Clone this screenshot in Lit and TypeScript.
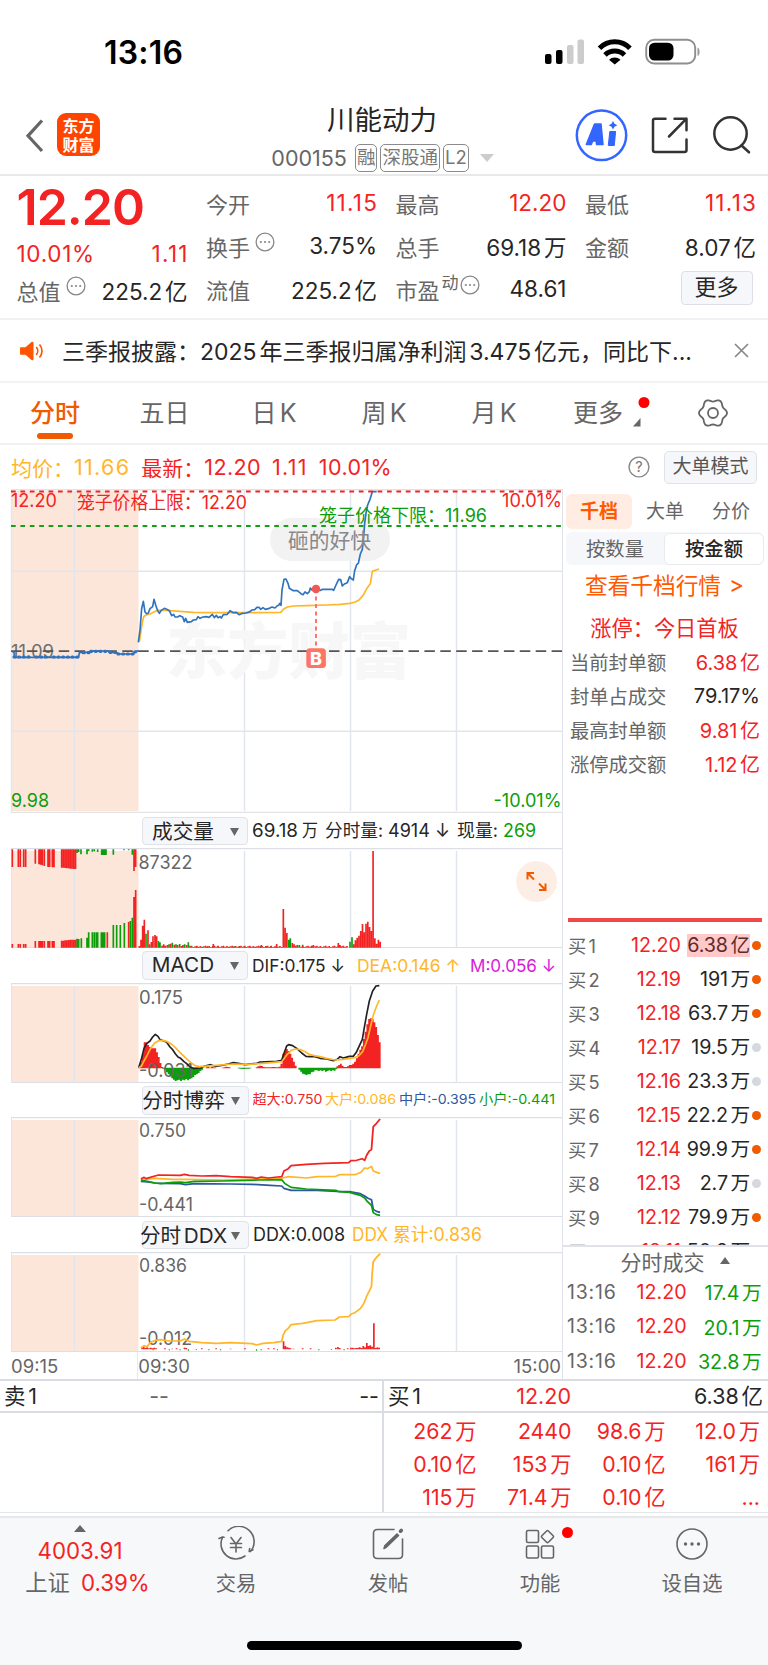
import { LitElement, html, svg, css } from "lit";
import { customElement, property } from "lit/decorators.js";

const GRID = "#e1e5ee";
const RED = "#f42323";
const GREEN = "#0b9e0b";
const AMBER = "#ffb629";
const GRAY = "#666";
const INK = "#262626";

type Bar = [number, number];

/** Vertical bars standing on (or hanging from) a base line, as one path. */
const barPath = (bars: Bar[], base: number, dir = -1) =>
  bars.map(([x, h]) => `M${x} ${base}v${(dir * h).toFixed(1)}`).join("");

/** Expands a run of heights into bars placed at a constant pitch. */
const run = (x: number, heights: number[], pitch = 5.3): Bar[] =>
  heights.map((h, i) => [x + i * pitch, h] as Bar).filter((b) => b[1] > 0);

const label = (
  x: number,
  y: number,
  text: string,
  width: number,
  fill = GRAY,
  size = 18.5
) => svg`<text x=${x} y=${y + size * 0.36} fill=${fill} font-size=${size}
  textLength=${width} lengthAdjust="spacingAndGlyphs">${text}</text>`;

const shared = css`
  * {
    box-sizing: border-box;
  }
  svg {
    display: block;
    flex: none;
  }
  .row {
    display: flex;
    align-items: center;
    white-space: nowrap;
  }
  .red {
    color: #f42323;
  }
  .green {
    color: #0b9e0b;
  }
  .amber {
    color: #ffb629;
  }
`;

@customElement("status-bar")
class StatusBar extends LitElement {
  static styles = [
    shared,
    css`
      :host {
        display: flex;
        justify-content: space-between;
        height: 97px;
        padding: 33px 67px 0 104px;
      }
      .time {
        font-size: 32px;
        line-height: 40px;
        font-weight: 600;
        letter-spacing: 0.2px;
        color: #000;
      }
      .signals {
        margin-top: 4px;
      }
    `,
  ];
  render() {
    return html`<div class="time">13:16</div>
      <svg class="signals" width="157" height="30" viewBox="544 37 157 30">
        <rect x="545" y="54" width="6.5" height="10" rx="2" />
        <rect x="556" y="50" width="6.5" height="14" rx="2" />
        <rect x="567" y="45" width="6.5" height="19" rx="2" fill="#ccc" />
        <rect x="577.5" y="39.5" width="6.5" height="24.5" rx="2" fill="#ccc" />
        <g fill="none" stroke="#000" stroke-width="5">
          <path d="M599.5 48.2a21.4 21.4 0 0 1 30.5 0" />
          <path d="M605 55a14 14 0 0 1 19.500 0" />
        </g>
        <path d="M609 59.800a8.500 8.500 0 0 1 11.500 0L614.750 64.500Z" />
        <rect x="646.2" y="39.800" width="49" height="23.700" rx="8" fill="none" stroke="#8e8e8e" stroke-width="1.900" />
        <rect x="649" y="42.700" width="24.500" height="17.800" rx="5.500" />
        <path d="M697.500 47.500c2.800 1 2.800 7.500 0 8.500z" fill="#999" />
      </svg>`;
  }
}

@customElement("title-bar")
class TitleBar extends LitElement {
  static styles = [
    shared,
    css`
      :host {
        display: flex;
        align-items: flex-start;
        height: 79px;
        border-bottom: 2px solid #e9e9e9;
      }
      .back {
        margin: 22px 0 0 25px;
      }
      .logo {
        width: 43px;
        height: 43px;
        margin: 16px 0 0 13px;
        border-radius: 9px;
        background: #ff4400;
        color: #fff;
        display: grid;
        place-content: center;
        text-align: center;
        font: 700 16px/18.500px "Noto Sans CJK SC", sans-serif;
      }
      .middle {
        flex: 1;
        display: flex;
        flex-direction: column;
        align-items: center;
      }
      .name {
        font-size: 27.500px;
        line-height: 40px;
        margin-top: 3px;
        margin-left: 89px;
        color: #262626;
      }
      .sub {
        color: #666;
        gap: 3px;
        height: 29px;
        margin-top: 3.500px;
        margin-left: 90px;
      }
      .code {
        font-size: 21.500px;
        margin-right: 5px;
        letter-spacing: 0;
      }
      .tag {
        border: 1.500px solid #8b8b8b;
        border-radius: 5px;
        font-size: 18.500px;
        line-height: 25px;
        height: 28px;
        padding: 0 1px;
        color: #777;
      }
      .caret {
        margin-left: 8px;
      }
      .tools {
        margin: 12px 17px 0 0;
      }
    `,
  ];
  render() {
    return html`<svg class="back" width="19" height="34" viewBox="0 0 19 34">
        <path d="M17 1.500 3 16.800 17 32" fill="none" stroke="#666" stroke-width="3.200" />
      </svg>
      <div class="logo"><span>东方</span><span>财富</span></div>
      <div class="middle">
        <div class="name">川能动力</div>
        <div class="sub row">
          <span class="code">000155</span><span class="tag">融</span><span class="tag">深股通</span
          ><span class="tag">L2</span>
          <svg class="caret" width="14" height="8"><path d="M0 0h14L7 8z" fill="#ccc" /></svg>
        </div>
      </div>
      <svg class="tools" width="176" height="54" viewBox="575 109 176 54">
        <circle cx="601.500" cy="135.300" r="24.700" fill="#fff" stroke="#3366ff" stroke-width="2.500" />
        <path
          fill-rule="evenodd"
          stroke="#3366ff"
          stroke-width="1.500"
          stroke-linejoin="round"
          fill="#3366ff"
          d="M594.500 124h6.500l2 20.500h-6.500l-.3-3.500h-3.600l-1.300 3.500h-5zM594.300 137h2.100l-.3-5.500z"
        />
        <path fill="#3366ff" stroke="#3366ff" stroke-width="1" stroke-linejoin="round" d="M609.800 131.500h5.800l-1.300 14h-6z" />
        <path fill="#3366ff" d="M613 121l1.500 2.800 2.800 1.500-2.800 1.500-1.500 2.800-1.500-2.800-2.800-1.500 2.800-1.500z" />
        <g fill="none" stroke="#333" stroke-width="2.500" stroke-linecap="round" stroke-linejoin="round">
          <path d="M665.500 118.700h-10.500q-2 0-2 2v29.300q0 2 2 2h29.500q2 0 2-2v-10.500" />
          <path d="M674.500 118.700h12v11.500M686.500 118.700 669 136.500" />
          <circle cx="730.500" cy="133.500" r="16.200" />
          <path d="m741.500 145.500 7.500 6.800" />
        </g>
      </svg>`;
  }
}

@customElement("more-dots")
class MoreDots extends LitElement {
  static styles = [
    shared,
    css`
      :host {
        display: block;
      }
    `,
  ];
  render() {
    return html`<svg width="20" height="20" viewBox="0 0 20 20">
      <circle cx="10" cy="10" r="8.900" fill="none" stroke="#888" stroke-width="1.300" />
      <g fill="#888">
        <circle cx="5.800" cy="10" r="1.100" /><circle cx="10" cy="10" r="1.100" /><circle cx="14.200" cy="10" r="1.100" />
      </g>
    </svg>`;
  }
}

@customElement("quote-panel")
class QuotePanel extends LitElement {
  static styles = [
    shared,
    css`
      :host {
        display: grid;
        grid-template-columns: repeat(4, 171px);
        column-gap: 18.500px;
        height: 144px;
        padding: 5px 0 0 16.500px;
        border-bottom: 2px solid #f1f1f1;
        font-size: 22.500px;
        color: #262626;
      }
      .cell {
        height: 43px;
        justify-content: space-between;
      }
      .k {
        color: #666;
        font-size: 22px;
      }
      .v {
        letter-spacing: 0;
      }
      .v.wide {
        letter-spacing: 1.300px;
        margin-right: -1.300px;
      }
      .v.mid {
        letter-spacing: 0.700px;
      }
      .price {
        height: 51px;
        font-size: 50px;
        font-weight: 600;
        letter-spacing: -1px;
      }
      .chg {
        height: 43px;
      }
      .low {
        height: 29px;
      }
      .hint {
        align-self: center;
        margin: -8px auto 0 5px;
      }
      .dyn {
        font-size: 17px;
        color: #666;
        margin: -14px 0 0 2px;
      }
      .dyn + .hint {
        margin-left: 1px;
      }
      .more {
        align-self: flex-end;
        width: 72px;
        height: 34px;
        margin: 4px 3.500px 0 0;
        border: 1.500px solid #dcdfe6;
        border-radius: 4px;
        background: #f6f7fa;
        font-size: 22px;
        line-height: 30px;
        text-align: center;
      }
      .col {
        display: flex;
        flex-direction: column;
      }
    `,
  ];
  render() {
    const cell = (k: string, v: string, tone = "") => html`<div class="cell row">
      <span class="k">${k}</span><span class="v ${tone}">${v}</span>
    </div>`;
    return html`<div class="col">
        <div class="price row red">12.20</div>
        <div class="cell chg row red"><span class="v mid">10.01%</span><span class="v wide">1.11</span></div>
        <div class="cell low row">
          <span class="k">总值</span><more-dots class="hint"></more-dots><span class="v">225.2亿</span>
        </div>
      </div>
      <div class="col">
        ${cell("今开", "11.15", "red wide")}
        <div class="cell row">
          <span class="k">换手</span><more-dots class="hint"></more-dots><span class="v">3.75%</span>
        </div>
        ${cell("流值", "225.2亿")}
      </div>
      <div class="col">
        ${cell("最高", "12.20", "red")}${cell("总手", "69.18万", "")}
        <div class="cell row">
          <span class="k">市盈</span><span class="dyn">动</span><more-dots class="hint"></more-dots
          ><span class="v">48.61</span>
        </div>
      </div>
      <div class="col">
        ${cell("最低", "11.13", "red wide")}${cell("金额", "8.07亿")}
        <div class="more">更多</div>
      </div>`;
  }
}

@customElement("news-strip")
class NewsStrip extends LitElement {
  static styles = [
    shared,
    css`
      :host {
        display: flex;
        align-items: center;
        height: 63px;
        padding: 0 19px 0 20px;
        border-bottom: 2px solid #f3f3f3;
      }
      .txt {
        flex: 1;
        margin-left: 18px;
        margin-top: -1px;
        font-size: 23px;
        color: #262626;
        white-space: nowrap;
      }
    `,
  ];
  render() {
    return html`<svg width="24" height="20" viewBox="0 0 24 20">
        <path d="M1 6.200h4.500L11.500 1c1-.7 2-.2 2 1v16c0 1.200-1 1.700-2 1L5.500 13.800H1q-1-.1-1-1V7.200q0-.9 1-1z" fill="#ff5400" />
        <path d="M16.200 6c2 2.300 2 5.700 0 8M19.500 3.500c3.300 3.600 3.300 9.400 0 13" fill="none" stroke="#ff5400" stroke-width="1.700" />
      </svg>
      <div class="txt">三季报披露：2025年三季报归属净利润3.475亿元，同比下...</div>
      <svg width="15" height="15"><path d="M1 1 14 14M14 1 1 14" stroke="#888" stroke-width="1.700" /></svg>`;
  }
}

const gear = Array.from({ length: 73 }, (_, i) => {
  const a = (i / 72) * Math.PI * 2;
  const r = 12.7 + 1.3 * Math.cos(6 * a);
  return `${i ? "L" : "M"}${(15 + r * Math.cos(a)).toFixed(2)} ${(15 + r * Math.sin(a)).toFixed(2)}`;
}).join("");

@customElement("period-tabs")
class PeriodTabs extends LitElement {
  static styles = [
    shared,
    css`
      :host {
        display: grid;
        grid-template-columns: 110px 109px 110px 110px 110px 98px 1fr;
        height: 62px;
        border-bottom: 2px solid #f1f1f1;
        color: #666;
        font-size: 25px;
      }
      .tab {
        display: flex;
        flex-direction: column;
        align-items: center;
        justify-content: flex-end;
        line-height: 36px;
        padding-bottom: 12px;
        position: relative;
      }
      .on {
        color: #f05a00;
        font-weight: 500;
        padding-bottom: 4px;
      }
      .on::after {
        content: "";
        width: 36px;
        height: 6px;
        margin-top: 2px;
        border-radius: 3px;
        background: #f05a00;
      }
      .mark {
        position: absolute;
        left: 83px;
        top: 13px;
      }
      .gear {
        margin: 14.500px 0 0 50.500px;
      }
    `,
  ];
  render() {
    return html`<div class="tab on">分时</div>
      ${["五日", "日K", "周K", "月K"].map((t) => html`<div class="tab">${t}</div>`)}
      <div class="tab">
        更多<svg class="mark" width="18" height="32" viewBox="0 0 18 32">
          <circle cx="12" cy="6.500" r="5.500" fill="#f00" />
          <path d="M8.500 22v8.500H1z" fill="#666" />
        </svg>
      </div>
      <svg class="gear" width="30" height="30">
        <path d=${gear + "Z"} fill="none" stroke="#666" stroke-width="1.800" />
        <circle cx="15" cy="15" r="5" fill="none" stroke="#666" stroke-width="1.800" />
      </svg>`;
  }
}

@customElement("info-line")
class InfoLine extends LitElement {
  static styles = [
    shared,
    css`
      :host {
        display: flex;
        align-items: center;
        height: 44px;
        padding: 0 11px;
        font-size: 21px;
        white-space: nowrap;
      }
      .num {
        margin-right: 11px;
        font-size: 21.500px;
        letter-spacing: 0.400px;
      }
      .one {
        letter-spacing: 1.300px;
      }
      .help {
        margin: 0 14px 0 auto;
      }
      .mode {
        width: 93px;
        height: 33px;
        border: 1.500px solid #dfe2e8;
        border-radius: 5px;
        background: #f6f7fa;
        color: #555;
        font-size: 19px;
        line-height: 30px;
        text-align: center;
      }
    `,
  ];
  render() {
    return html`<span class="amber">均价：</span><span class="num one amber">11.66</span
      ><span class="red">最新：</span><span class="num red">12.20</span><span class="num one red">1.11</span
      ><span class="num red">10.01%</span>
      <svg class="help" width="22" height="22" viewBox="0 0 22 22">
        <circle cx="11" cy="11" r="9.900" fill="none" stroke="#888" stroke-width="1.400" />
        <text x="11" y="16" text-anchor="middle" font-size="14.500" fill="#777">?</text>
      </svg>
      <div class="mode">大单模式</div>`;
  }
}

const columnLines = (y1: number, y2: number) => svg`
  <rect x="11.5" y=${y1} width="127" height=${y2 - y1} fill="#fce6da" />
  <path d="M74.500 ${y1}V${y2}M244.500 ${y1}V${y2}M350.500 ${y1}V${y2}M456.500 ${y1}V${y2}"
    stroke=${GRID} stroke-width="1.500" fill="none" />`;

@customElement("price-chart")
class PriceChart extends LitElement {
  static styles = [
    shared,
    css`
      :host {
        display: block;
      }
      .mark {
        font-family: "Noto Sans CJK SC", sans-serif;
        font-weight: 900;
      }
    `,
  ];
  render() {
    return html`<svg width="562" height="324" viewBox="0 489 562 324">
      ${columnLines(491, 811)}
      <text class="mark" x="166" y="674" font-size="61" fill="#f7f7f7" textLength="245" lengthAdjust="spacingAndGlyphs">东方财富</text>
      <path d="M11 571.3H562M11 731.2H562M11.5 489V813" stroke=${GRID} stroke-width="1.500" />
      <path d="M11 489.700H562M11 812.500H562" stroke="#e3e3e8" stroke-width="1.500" />
      <rect x="270" y="518" width="120" height="43" rx="21.500" fill="#f1f1f2" fill-opacity=".92" />
      ${label(11, 651, "11.09", 43, "#707070")}
      <path d="M11 651.200H562" stroke="#555" stroke-width="1.800" stroke-dasharray="10.500 5.400" />
      <g transform="translate(0 480) scale(.33333)" fill="none" stroke-linejoin="round">
        <path stroke=${AMBER} stroke-width="5"
          d="M418 485L422 460 427 428 431 410 438 405 450 402 462 396 474 391 500 391 540 394 580 397 640 398 760 398 842 397 850 388 862 381 880 378 920 377 980 375 1020 373 1050 370 1066 366 1078 359 1090 345 1102 323 1111 311 1117 274 1128 270 1137 267" />
        <path stroke="#2f72bd" stroke-width="5"
          d="M37 516H42L43 532H236L238 518 268 516 276 513H324L328 517H348L356 522H400L404 516 416 512" />
        <path stroke="#2f72bd" stroke-width="9.500" stroke-linecap="round" stroke-dasharray="3 11"
          d="M40 518M42 531H90M108 531H142M160 531H236M250 518H268M272 514H326M330 517H350M354 522H400M404 516L416 513" />
        <path stroke="#2f72bd" stroke-width="5"
          d="M415 487L420 450 425 386 430 364 435 396 440 401 445 399 450 386 458 380 462 358 468 378 473 392 478 400 484 391 493 385 500 388 508 392 515 407 521 403 525 411 533 411 539 407 548 411 553 425 557 415 562 427 574 425 580 420 589 419 594 410 600 415 609 411 619 410 627 412 637 403 643 413 649 406 654 413 660 410 664 414 670 404 682 403 690 392 700 398 709 397 717 404 728 400 738 399 750 395 756 390 764 389 771 382 777 382 782 388 789 383 796 388 808 385 816 381 825 384 831 378 836 376 840 370 843 376 846 330 852 298 858 297 864 310 868 325 880 332 892 332 903 341 909 344 915 336 922 341 928 335 931 324 936 330 942 324 950 330 962 331 968 328 996 328 1001 331 1008 315 1016 298 1022 299 1027 318 1033 312 1042 308 1049 290 1054 296 1060 300 1064 272 1070 254 1075 250 1081 222 1087 208 1091 170 1094 130 1098 100 1103 75 1110 58 1117 35H1130" />
      </g>
      <path d="M316 589V648" stroke="#ff7468" stroke-width="2" stroke-dasharray="4 3.500" />
      <circle cx="316" cy="589" r="4.300" fill="#ee5a50" />
      <rect x="306.300" y="648.300" width="19.600" height="19.600" rx="3.500" fill="#ff7565" />
      <text x="316" y="664.500" text-anchor="middle" font-size="18" font-weight="800" fill="#fff">B</text>
      <path d="M11 491.400H562" stroke=${RED} stroke-width="2" stroke-dasharray="4.700 4.700" />
      <path d="M11 526H562" stroke="#15a015" stroke-width="2" stroke-dasharray="4.700 4.700" />
      ${label(11, 500.5, "12.20", 46, RED)} ${label(77, 502, "笼子价格上限：12.20", 170, RED)}
      ${label(502, 500.5, "10.01%", 60, RED)} ${label(319, 515, "笼子价格下限：11.96", 168, GREEN)}
      ${label(11, 800, "9.98", 38, GREEN)} ${label(493.5, 800, "-10.01%", 68, GREEN)}
      ${label(288, 540, "砸的好快", 83, "#888", 21)}
    </svg>`;
  }
}

@customElement("indicator-head")
class IndicatorHead extends LitElement {
  @property() name = "";
  static styles = [
    shared,
    css`
      :host {
        display: flex;
        align-items: center;
        height: 35px;
        padding: 1px 0 0 142px;
        white-space: nowrap;
      }
      .pick {
        width: 107px;
        height: 28.500px;
        border: 1.500px solid #dfe2e8;
        border-radius: 4px;
        background: #f6f7fa;
        color: #262626;
        font-size: 20.700px;
        margin-right: 4px;
        position: relative;
        justify-content: center;
        padding: 0 24px 2px 0;
      }
      .pick svg {
        position: absolute;
        right: 8px;
        top: 10px;
      }
    `,
  ];
  render() {
    return html`<div class="pick row">
        ${this.name}<svg width="9" height="8"><path d="M0 0h9L4.500 8z" fill="#666" /></svg>
      </div>
      <slot></slot>`;
  }
}

const frame = (top: number) => svg`
  ${columnLines(top + 3, top + 99)}
  <path d="M11.500 ${top}V${top + 100}" stroke=${GRID} />
  <path d="M11 ${top + 0.5}H562M11 ${top + 99.7}H562" stroke="#dcdfe6" stroke-width="1.500" />`;

const tiny = (from: number, to: number, seed: number): Bar[] => {
  const out: Bar[] = [];
  for (let x = from, i = seed; x < to; x += 5.3, i++) out.push([x, 2 + ((i * 7) % 5)]);
  return out;
};

@customElement("volume-chart")
class VolumeChart extends LitElement {
  static styles = [shared];
  render() {
    const hangRed: Bar[] = [
      [37, 53], [55, 53], [61, 53], [71, 53], [77, 53], [106, 43], [117, 45], [122, 46], [127, 48], [133, 50],
      [144, 53], [149, 53], [157, 54], [162, 54], ...run(185, [55, 55, 56, 57, 57, 58, 58, 59, 59], 5.2),
      [402, 65], [407, 53],
    ];
    const hangGreen: Bar[] = [
      [231, 11], [236, 8], [243, 15], [261, 15], [266, 5], [277, 7], [283, 6], [293, 8], [305, 17], [309, 17],
      [314, 17], [318, 17], [340, 16], [372, 3], [386, 3], [397, 16],
    ];
    const green: Bar[] = [
      [231, 27], [236, 26], [244, 28], [261, 30], [266, 46], [277, 46], [283, 46], [289, 46], [293, 46],
      ...run(304, [46, 46, 46], 5), [340, 68], [350, 68], [361, 68], [373, 74], [391, 80], [397, 90],
      [438, 42], [449, 10], [475, 20], [480, 16], [507, 10], [517, 15], [528, 10], [539, 11], [554, 10], [565, 16],
      ...tiny(575, 845, 2).filter((_, i) => i % 3 === 0), [866, 24], [871, 28], [892, 8], [898, 8], [908, 9],
      [935, 6], [1050, 18], [1056, 31],
    ];
    const red: Bar[] = [
      [37, 11], [55, 11], [61, 11], [71, 11], [77, 11], [106, 20], [117, 20], [122, 20], [127, 20], [133, 20],
      [144, 20], [149, 20], [157, 20], [162, 20], ...run(185, [21, 21, 22, 22, 23, 24, 24, 24, 24], 5.2),
      [322, 46], [386, 77], [402, 152], [407, 173],
      [418, 5], [423, 24], [428, 66], [433, 84], [444, 52], [454, 17], [459, 34], [465, 38], [470, 34], [486, 6],
      [491, 10], [496, 6], [502, 8], [512, 12], [523, 9], [533, 8], [544, 5], [549, 8], [560, 8], [570, 6],
      ...tiny(580, 845, 0), [640, 11], [784, 8], [830, 11], ...run(850, [116, 60, 44]), ...run(877, [14, 10, 6]),
      ...tiny(903, 1045, 3), [940, 8], [1015, 14], [1020, 8],
      ...run(1061, [10, 22, 30, 36, 50, 71, 46, 72, 78, 62, 50, 290, 28, 12, 24, 18]),
    ];
    return html`<svg width="562" height="100" viewBox="0 847 562 100">
      ${frame(847)}
      <g transform="translate(0 810) scale(.33333)" stroke-width="5" fill="none">
        <path stroke=${GREEN} d=${barPath(green, 410) + barPath(hangGreen, 115, 1)} />
        <path stroke=${RED} d=${barPath(red, 410) + barPath(hangRed, 115, 1)} />
      </g>
      ${label(138.5, 861, "87322", 54)}
      <circle cx="536.500" cy="880.500" r="20.500" fill="#fdeee5" />
      <path
        d="M527.500 878.500v-6.500h6.500M527.500 872l6.500 6.500M545.500 882.500v6.500h-6.500M545.500 889l-6.500-6.500"
        stroke="#f05a00" stroke-width="2" fill="none" />
    </svg>`;
  }
}

@customElement("macd-chart")
class MacdChart extends LitElement {
  static styles = [shared];
  render() {
    const red: Bar[] = [
      ...run(418, [5, 20, 45, 78, 78, 70, 64, 60, 60, 60, 48, 34, 16, 4]),
      ...run(620, [3, 4, 2, 5, 3, 2, 0, 0, 0, 2, 3, 5, 4, 3]),
      ...run(770, [3, 6, 8, 7, 4, 3, 3, 3, 3, 4, 4, 3, 3, 5, 14]),
      ...run(850, [44, 52, 58, 52, 44, 32, 20, 8]),
      ...run(1012, [6, 10, 14, 8, 4, 4, 6, 10, 10, 14, 20, 30, 44, 56, 66, 88, 110, 132, 148, 150, 148, 138, 124, 100, 78], 5.3),
    ];
    const green: Bar[] = [
      ...run(490, [3, 6, 14, 20, 26, 32, 36, 40, 38, 36, 40, 36, 38, 34, 38, 34, 32, 28, 22, 20, 16, 10, 6]),
      ...run(715, [2, 3, 3, 4, 3, 3, 3, 2]),
      ...run(898, [6, 12, 18, 20, 22, 20, 20, 14, 12, 8, 8, 10, 8, 10, 8, 12, 10, 8, 10, 8, 9, 4]),
    ];
    return html`<svg width="562" height="100" viewBox="0 982 562 100">
      ${frame(982)}
      <g transform="translate(0 810) scale(.33333)" fill="none">
        <path stroke=${GREEN} stroke-width="5.500" d=${barPath(green, 770, 1)} />
        <path stroke=${RED} stroke-width="5.500" d=${barPath(red, 772)} />
      </g>
      ${label(139, 996, "0.175", 44)} ${label(139, 1069.5, "-0.031", 54)}
      <g transform="translate(0 810) scale(.33333)" fill="none" stroke-linejoin="round">
        <path stroke="#222" stroke-width="5"
          d="M416 770L424 745 432 712 440 698 450 690 458 678 466 670 474 676 480 686 492 690 500 694 510 708 518 716 526 728 534 738 542 742 552 752 560 758 570 768 580 772 602 771 612 766 632 761 645 766 665 763 685 759 700 755 715 757 735 761 770 757 780 753 830 751 845 748 851 730 860 705 866 701 878 704 890 712 905 726 918 736 930 737 945 737 960 742 980 744 1000 749 1012 745 1020 737 1030 741 1048 736 1060 736 1070 722 1080 700 1087 685 1092 655 1100 610 1108 570 1118 540 1128 525 1138 524" />
        <path stroke=${AMBER} stroke-width="5"
          d="M416 770L424 766 432 750 442 732 452 712 464 696 476 689 488 688 502 692 514 699 526 710 540 724 556 740 572 754 584 763 598 767 640 764 700 759 745 760 790 757 845 752 853 742 862 730 874 718 886 714 902 716 916 722 926 729 942 734 960 737 980 742 1005 747 1030 745 1060 741 1076 735 1088 722 1096 702 1104 680 1112 645 1120 612 1130 585 1138 567" />
      </g>
    </svg>`;
  }
}

@customElement("game-chart")
class GameChart extends LitElement {
  static styles = [shared];
  render() {
    return html`<svg width="562" height="100" viewBox="0 1117 562 100">
      ${frame(1117)} ${label(139, 1130.5, "0.750", 47)} ${label(139, 1204, "-0.441", 54)}
      <g transform="translate(0 1080) scale(.3603 .33333)" fill="none" stroke-width="5" stroke-linejoin="round">
        <path stroke="#2e57a0" d="M391 304L410 306 430 309 450 310 500 311 515 314 540 311 640 312 700 313 750 316 782 318 788 325 808 331 880 331 935 334 970 335 1000 341 1012 348 1020 354 1031 359 1036 388 1045 394 1055 397" />
        <path stroke=${AMBER} d="M391 299L430 295 480 298 515 298 620 300 700 297 750 296 785 294 800 290 850 294 880 290 932 289 942 284 985 284 1002 277 1012 264 1020 266 1031 259 1036 273 1045 277 1055 280" />
        <path stroke=${GREEN} d="M391 301L410 304 430 309 445 311 480 307 500 306 515 308 540 304 620 303 720 300 782 299 790 310 808 322 850 327 932 331 940 335 970 337 1000 346 1012 354 1020 365 1031 376 1036 398 1045 404 1055 406" />
        <path stroke=${RED} d="M391 297L400 292 405 296 430 288 440 285 500 286 512 283 525 286 560 288 600 287 640 290 700 292 712 295 725 291 745 294 770 291 782 290 788 273 800 266 808 257 850 253 900 250 968 248 974 242 990 241 1005 236 1012 241 1018 225 1025 213 1031 209 1033 180 1036 140 1045 130 1055 117" />
      </g>
    </svg>`;
  }
}

@customElement("ddx-chart")
class DdxChart extends LitElement {
  static styles = [shared];
  render() {
    const red: Bar[] = [
      ...run(394, [6, 9, 4, 6, 3, 5, 3, 5, 3], 4.9), [458, 3], [478, 2], [490, 3], [512, 5], [517, 4], [560, 3],
      [600, 3], [640, 2], [680, 3], [745, 3], [760, 3], ...run(787, [24, 10, 6, 5, 3], 4.9), [815, 2], [840, 3],
      [862, 3], [932, 5], [938, 7], [943, 4], [965, 3], ...run(974, [5, 5, 3, 4, 5, 6, 4, 10, 6, 19, 10, 12, 8, 78, 4, 6, 5], 4.9),
    ];
    const green: Bar[] = [[425, 3], [470, 3], [500, 3], [523, 4], [545, 2], [580, 3], [612, 3], [712, 4], [725, 3], [770, 3], [885, 3], [920, 2], [955, 3]];
    return html`<svg width="562" height="100" viewBox="0 1252 562 100">
      ${frame(1252)} ${label(139, 1265.5, "0.836", 48)} ${label(139, 1338.5, "-0.012", 53)}
      <g transform="translate(0 1080) scale(.3603 .33333)" fill="none" stroke-linejoin="round">
        <path stroke=${RED} stroke-width="4.700" d=${barPath(red, 808)} />
        <path stroke=${GREEN} stroke-width="3.500" d=${barPath(green, 808, 1)} />
        <path stroke=${AMBER} stroke-width="5" d="M391 804L400 797 408 800 418 787 432 781 445 779 470 783 500 783 512 777 525 784 560 788 600 790 640 788 700 791 712 795 730 790 760 788 782 784 786 765 792 752 800 745 808 734 840 730 880 722 930 720 942 711 968 710 975 702 985 698 1000 686 1010 670 1018 648 1031 620 1033 580 1036 545 1045 532 1055 521" />
      </g>
    </svg>`;
  }
}

@customElement("charts-column")
class ChartsColumn extends LitElement {
  static styles = [
    shared,
    css`
      :host {
        display: flex;
        flex-direction: column;
        width: 563px;
        height: 890px;
        border-right: 1.500px solid #dfe2ea;
      }
      price-chart,
      volume-chart,
      macd-chart,
      game-chart,
      ddx-chart {
        display: block;
      }
      .axis {
        flex: 1;
        justify-content: space-between;
        padding: 0 1px 0 11px;
        font-size: 18.500px;
        color: #666;
      }
      .mid {
        margin-right: auto;
        margin-left: 79px;
        border-left: 1px solid #e8ebf1;
        height: 27px;
        line-height: 28px;
      }
    `,
  ];
  render() {
    const legend = (parts: [string, number, number, string][], size: number) => html`<svg width="310" height="28" viewBox="253 0 310 28">
      ${parts.map(([t, x, w, c]) => label(x, 13.5, t, w, c, size))}
    </svg>`;
    return html`<price-chart></price-chart>
      <indicator-head name="成交量">
        ${legend([["69.18", 253, 46, INK], ["万", 303, 16, INK], ["分时量:", 326, 58, INK], ["4914 ↓", 389, 62, INK], ["现量:", 458, 41, INK], ["269", 504, 33, GREEN]], 18.2)}
      </indicator-head>
      <volume-chart></volume-chart>
      <indicator-head name="MACD">
        ${legend([["DIF:0.175 ↓", 253, 93, INK], ["DEA:0.146 ↑", 358, 103, AMBER], ["M:0.056 ↓", 471, 86, "#d81bd8"]], 17.5)}
      </indicator-head>
      <macd-chart></macd-chart>
      <indicator-head name="分时博弈">
        ${legend([["超大:0.750", 252.5, 70, RED], ["大户:0.086", 325, 71, AMBER], ["中户:-0.395", 399, 77, "#2e57a0"], ["小户:-0.441", 479, 76, GREEN]], 13.5)}
      </indicator-head>
      <game-chart></game-chart>
      <indicator-head name="分时DDX">
        ${legend([["DDX:0.008", 253, 92, INK], ["DDX", 352, 36, AMBER], ["累计:0.836", 393, 89, AMBER]], 18)}
      </indicator-head>
      <ddx-chart></ddx-chart>
      <div class="axis row"><span>09:15</span><span class="mid">09:30</span><span>15:00</span></div>`;
  }
}

@customElement("depth-column")
class DepthColumn extends LitElement {
  static styles = [
    shared,
    css`
      :host {
        display: flex;
        flex-direction: column;
        width: 205px;
        height: 890px;
        color: #262626;
      }
      :host > * {
        flex: none;
      }
      .tabs {
        height: 36px;
        margin: 4px 4px 3px 3px;
        font-size: 19px;
        color: #666;
      }
      .tabs span {
        width: 66px;
        line-height: 35px;
        border-radius: 6px;
        text-align: center;
      }
      .tabs .on {
        background: #ffede4;
        color: #ff5a00;
        font-weight: 700;
      }
      .seg {
        height: 33px;
        margin: 0 4px 0 3px;
        border-radius: 6px;
        background: #f6f7fa;
        color: #666;
        font-size: 19.300px;
      }
      .seg span {
        flex: 1;
        text-align: center;
        line-height: 30px;
      }
      .seg .on {
        background: #fff;
        border: 1.500px solid #e8eaee;
        border-radius: 6px;
        color: #262626;
        font-weight: 500;
      }
      .link {
        height: 38px;
        justify-content: center;
        color: #ff5a00;
        font-size: 22.700px;
        gap: 8px;
        padding-right: 2px;
      }
      .limit {
        height: 46px;
        justify-content: center;
        color: #f42323;
        font-size: 21.200px;
        padding-right: 2px;
      }
      .facts {
        padding: 0 8px 0 7px;
        height: 273.500px;
        margin-top: -4.500px;
        font-size: 20px;
      }
      .fact {
        height: 34px;
        justify-content: space-between;
      }
      .fact .k {
        color: #666;
        font-size: 19.300px;
      }
      .bar {
        height: 4px;
        margin: 0 6px 6px 5px;
        background: #f04848;
      }
      .buys {
        height: 318.500px;
        overflow: hidden;
        border-bottom: 2px solid #dfe2e8;
      }
      .buy {
        display: grid;
        grid-template-columns: 43px 73px 66px 1fr;
        align-items: center;
        height: 34px;
        padding-left: 5px;
        font-size: 19.700px;
        white-space: nowrap;
      }
      .buy .k {
        color: #666;
        font-size: 18.300px;
      }
      .buy .p {
        text-align: right;
        color: #f42323;
        padding-right: 3px;
      }
      .buy .v {
        justify-self: end;
        height: 23px;
        line-height: 23px;
        letter-spacing: -0.1px;
      }
      .hot .v {
        background: #ffc9c9;
        color: #5c2c2c;
      }
      .dot {
        width: 9px;
        height: 9px;
        margin-left: 1.500px;
        border-radius: 50%;
        background: #d5d8de;
      }
      .dot.on {
        background: #f05a00;
      }
      .deal {
        height: 28px;
        justify-content: center;
        gap: 15px;
        padding-left: 19px;
        color: #666;
        font-size: 21px;
      }
      .trade {
        display: grid;
        grid-template-columns: 1fr 70px 75px;
        align-items: center;
        height: 34.600px;
        padding: 0 8px 0 4px;
        font-size: 19.700px;
        text-align: right;
        white-space: nowrap;
      }
      .trade .t {
        color: #666;
        text-align: left;
        font-size: 19.500px;
        letter-spacing: 0.800px;
      }
    `,
  ];
  render() {
    const facts = [
      ["当前封单额", "6.38亿", "red"],
      ["封单占成交", "79.17%", ""],
      ["最高封单额", "9.81亿", "red"],
      ["涨停成交额", "1.12亿", "red"],
    ];
    const buys: [string, string, boolean][] = [
      ["12.20", "6.38亿", true],
      ["12.19", "191万", true],
      ["12.18", "63.7万", true],
      ["12.17", "19.5万", false],
      ["12.16", "23.3万", false],
      ["12.15", "22.2万", true],
      ["12.14", "99.9万", true],
      ["12.13", "2.7万", false],
      ["12.12", "79.9万", true],
      ["12.11", "50.2万", true],
    ];
    return html`<div class="tabs row"><span class="on">千档</span><span>大单</span><span>分价</span></div>
      <div class="seg row"><span>按数量</span><span class="on">按金额</span></div>
      <div class="link row"><span>查看千档行情</span><span>&gt;</span></div>
      <div class="limit row">涨停：今日首板</div>
      <div class="facts">
        ${facts.map(([k, v, c]) => html`<div class="fact row"><span class="k">${k}</span><span class=${c}>${v}</span></div>`)}
      </div>
      <div class="bar"></div>
      <div class="buys">
        ${buys.map(
          ([p, v, on], i) => html`<div class="buy ${i ? "" : "hot"}">
            <span class="k">买${i + 1}</span><span class="p">${p}</span><span class="v">${v}</span
            ><span class="dot ${on ? "on" : ""}"></span>
          </div>`
        )}
      </div>
      <div class="deal row">分时成交<svg width="10" height="7"><path d="M0 7h10L5 0z" fill="#666" /></svg></div>
      ${["17.4万", "20.1万", "32.8万"].map(
        (v) => html`<div class="trade"><span class="t">13:16</span><span class="red">12.20</span><span class="green">${v}</span></div>`
      )}`;
  }
}

@customElement("order-book")
class OrderBook extends LitElement {
  static styles = [
    shared,
    css`
      :host {
        display: block;
        height: 134px;
        border-top: 2px solid #d9dce3;
        border-bottom: 1px solid #e4e6ea;
        color: #262626;
        font-size: 21.500px;
      }
      .split {
        display: grid;
        grid-template-columns: 384px 384px;
        height: 131px;
      }
      .side {
        border-right: 2px solid #d9dce3;
        height: 131px;
      }
      .side.buy {
        border: 0;
      }
      .head {
        display: grid;
        grid-template-columns: 90px 93px 1fr;
        height: 32px;
        line-height: 28px;
        align-items: center;
        padding: 0 5px 0 4px;
        border-bottom: 2px solid #d9dce3;
        text-align: right;
        white-space: nowrap;
      }
      .head .n {
        text-align: left;
      }
      .sell .head {
        grid-template-columns: 90px 75px 1fr;
        padding-right: 3px;
      }
      .dim {
        color: #666;
      }
      .lots {
        display: grid;
        grid-template-columns: 92.500px 95px 94px 94.500px;
        grid-auto-rows: 33.300px;
        align-items: center;
        line-height: 30px;
        padding-top: 1px;
        text-align: right;
        color: #f42323;
        white-space: nowrap;
        font-size: 21.300px;
      }
    `,
  ];
  render() {
    const lots = ["262万", "2440", "98.6万", "12.0万", "0.10亿", "153万", "0.10亿", "161万", "115万", "71.4万", "0.10亿", "..."];
    return html`<div class="split">
      <div class="side sell">
        <div class="head"><span class="n">卖1</span><span class="dim">--</span><span>--</span></div>
      </div>
      <div class="side buy">
        <div class="head"><span class="n">买1</span><span class="red">12.20</span><span>6.38亿</span></div>
        <div class="lots">${lots.map((l) => html`<span>${l}</span>`)}</div>
      </div>
    </div>`;
  }
}

@customElement("bottom-nav")
class BottomNav extends LitElement {
  static styles = [
    shared,
    css`
      :host {
        display: flex;
        flex-direction: column;
        justify-content: space-between;
        align-items: center;
        height: 149px;
        margin-top: 3px;
        background: #f7f8fa;
        border-top: 2px solid #e6e8eb;
        padding-bottom: 15px;
        color: #666;
      }
      .items {
        display: grid;
        grid-template-columns: 160px repeat(4, 152px);
        height: 84px;
      }
      .item {
        display: flex;
        flex-direction: column;
        align-items: center;
        padding-top: 8px;
        font-size: 20.300px;
      }
      .item span {
        line-height: 28px;
        margin-top: 8px;
      }
      .index {
        padding-top: 6.500px;
        font-size: 22.300px;
      }
      .index .val {
        line-height: 32px;
        margin-top: 3px;
      }
      .index .line {
        line-height: 32px;
        gap: 11px;
        display: flex;
        padding-left: 15px;
      }
      .index span.pct,
      .index span.nm {
        margin: 0;
        line-height: 31px;
      }
      .home {
        width: 275px;
        height: 9.500px;
        border-radius: 5px;
        background: #000;
      }
    `,
  ];
  render() {
    const icon = (body: unknown) => html`<svg width="60" height="36" viewBox="-30 -18 60 36" fill="none"
      stroke="#666" stroke-width="1.600" stroke-linecap="round" stroke-linejoin="round">${body}</svg>`;
    return html`<div class="items">
        <div class="item index">
          <svg width="12" height="7"><path d="M0 7h12L6 0z" fill="#666" /></svg>
          <span class="val red">4003.91</span>
          <div class="line"><span class="nm">上证</span><span class="pct red">0.39%</span></div>
        </div>
        <div class="item">
          ${icon(svg`<path d="M-8-13.200A15.300 15.300 0 0 1 14.500 7.500M9 12A15 15 0 0 1-13.500-6.500M-17-5.500l3.500-1.500 1.500.3M13.200 7.500l3.800-1.700M13.200 7.500l.5-3" />
            <path d="M-5-6.500 0 0 5-6.500M0 0V8M-5.500-.5H5.500M-5.500 3.500H5.500" />`)}
          <span>交易</span>
        </div>
        <div class="item">
          ${icon(svg`<path d="M6-14.500H-10.500Q-14.500-14.500-14.500-10.500V10.500Q-14.500 14.500-10.500 14.500H10.500Q14.500 14.500 14.500 10.500V-5" />
            <path d="M-4 4.500-3 1.500 9-10 10.500-8.500-1.500 3Z" fill="#666" /><path d="M12.500-12.800l.8-.8" stroke-width="3.600" />`)}
          <span>发帖</span>
        </div>
        <div class="item">
          ${icon(svg`<rect x="-13.500" y="-13.500" width="12" height="12" rx="1.500" /><rect x="-13.500" y="2" width="12" height="12" rx="1.500" />
            <rect x="1.500" y="2" width="12" height="12" rx="1.500" /><rect x="2.900" y="-12" width="9.200" height="9.200" rx="1.200" transform="rotate(45 7.500 -7.400)" />`)}
          <span>功能</span>
        </div>
        <div class="item">
          ${icon(svg`<circle r="15" /><g fill="#666" stroke="none"><circle cx="-6.500" r="1.700" /><circle r="1.700" /><circle cx="6.500" r="1.700" /></g>`)}
          <span>设自选</span>
        </div>
      </div>
      <div class="home"></div>`;
  }
}

@customElement("alert-dot")
class AlertDot extends LitElement {
  static styles = css`
    :host {
      display: block;
      width: 11px;
      height: 11px;
      border-radius: 50%;
      background: #f00;
    }
  `;
  render() {
    return html``;
  }
}

@customElement("app-root")
class AppRoot extends LitElement {
  static styles = [
    shared,
    css`
      :host {
        display: block;
        width: 768px;
        height: 1665px;
        overflow: hidden;
        background: #fff;
        font-family: Inter, "Noto Sans CJK SC", sans-serif;
        text-autospace: normal;
      }
      .board {
        display: flex;
        height: 890px;
      }
      .dock {
        position: relative;
      }
      .badge {
        position: absolute;
        left: 561.500px;
        top: 11px;
      }
    `,
  ];
  render() {
    return html`<status-bar></status-bar>
      <title-bar></title-bar>
      <quote-panel></quote-panel>
      <news-strip></news-strip>
      <period-tabs></period-tabs>
      <info-line></info-line>
      <div class="board"><charts-column></charts-column><depth-column></depth-column></div>
      <order-book></order-book>
      <div class="dock"><bottom-nav></bottom-nav><alert-dot class="badge"></alert-dot></div>`;
  }
}
